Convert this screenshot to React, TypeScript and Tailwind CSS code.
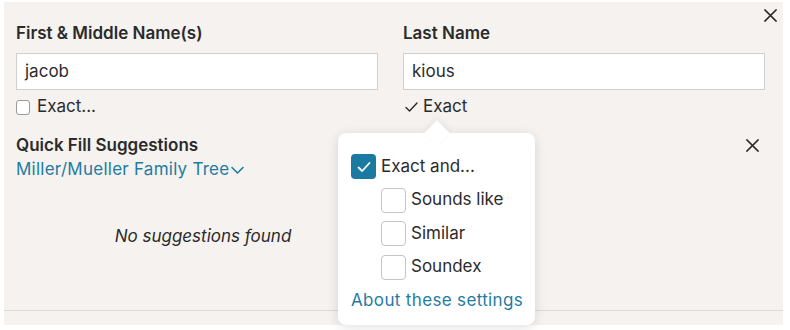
import React from "react";

const font = { fontFamily: "Inter, 'Noto Sans', sans-serif" };

function CloseIcon({ size = 16 }: { size?: number }) {
  return (
    <svg width={size} height={size} viewBox="0 0 16 16" fill="none">
      <path d="M2 2L14 14M14 2L2 14" stroke="#2b2b2b" strokeWidth="1.6" strokeLinecap="round" />
    </svg>
  );
}

function CheckBox({ checked = false }: { checked?: boolean }) {
  if (checked) {
    return (
      <span className="flex h-[25px] w-[25px] shrink-0 items-center justify-center rounded-[4px] bg-[#1b7aa1]">
        <svg width="16" height="16" viewBox="0 0 16 16" fill="none">
          <path d="M2.5 8.5L6.2 12L13.5 4" stroke="white" strokeWidth="1.8" strokeLinecap="round" strokeLinejoin="round" />
        </svg>
      </span>
    );
  }
  return <span className="h-[25px] w-[25px] shrink-0 rounded-[4px] border border-[#c4c4c4] bg-white" />;
}

export default function App() {
  return (
    <div className="h-[330px] w-[790px] bg-white pl-[4px] pt-[2px] text-[#2b2b2b]" style={font}>
      <div className="relative h-[323px] w-[779px] bg-[#f5f2ef]">
        {/* top close */}
        <button className="absolute right-[5px] top-[6px]" aria-label="Close">
          <CloseIcon size={15} />
        </button>

        <div className="pl-[12px] pr-[18px] pt-[19px]">
          <div className="grid grid-cols-[362px_362px] gap-x-[25px]">
            <div>
              <div className="text-[17px] font-semibold leading-[24px]">First &amp; Middle Name(s)</div>
              <div className="mt-[8px] flex h-[37px] items-center border border-[#cfcfcf] bg-white px-[8px] text-[17px]">
                jacob
              </div>
              <label className="mt-[5px] flex h-[24px] items-center gap-[7px] text-[17px]">
                <span className="h-[15px] w-[14px] rounded-[3px] border border-[#9a9a9a] bg-white" />
                Exact...
              </label>
            </div>
            <div>
              <div className="text-[17px] font-semibold leading-[24px]">Last Name</div>
              <div className="mt-[8px] flex h-[37px] items-center border border-[#cfcfcf] bg-white px-[8px] text-[17px]">
                kious
              </div>
              <div className="mt-[5px] flex h-[24px] items-center gap-[5px] pl-[2px] text-[17px]">
                <svg width="13" height="12" viewBox="0 0 13 12" fill="none">
                  <path d="M1 6.5L4.5 10L12 2" stroke="#2b2b2b" strokeWidth="1.4" strokeLinecap="round" strokeLinejoin="round" />
                </svg>
                Exact
              </div>
            </div>
          </div>

          <div className="mt-[14px] flex items-start justify-between">
            <div>
              <div className="text-[17px] font-semibold leading-[24px]">Quick Fill Suggestions</div>
              <div className="flex items-center text-[17px] leading-[24px] tracking-[0.25px] text-[#1f7ca3]">
                Miller/Mueller Family Tree
                <svg width="15" height="10" viewBox="0 0 15 10" fill="none" className="ml-[1px] mt-[2px]">
                  <path d="M2 2.5L7.5 8L13 2.5" stroke="#1f7ca3" strokeWidth="1.6" strokeLinecap="round" strokeLinejoin="round" />
                </svg>
              </div>
            </div>
            <button className="mr-[5px] mt-[5px]" aria-label="Close suggestions">
              <CloseIcon size={15} />
            </button>
          </div>

          <div className="mt-[43px] w-[362px] pl-[12px] text-center text-[17px] italic leading-[24px]">
            No suggestions found
          </div>
        </div>

        <div className="absolute bottom-[14px] left-0 right-0 border-t border-[#dcd9d6]" />

        {/* match options popover */}
        <div className="absolute left-[334px] top-[131px] h-[192px] w-[197px] rounded-[8px] bg-white shadow-[0_2px_12px_rgba(0,0,0,0.13)]">
          <span className="absolute left-[90px] top-[-9px] h-[18px] w-[18px] rotate-45 bg-white shadow-[-2px_-2px_6px_rgba(0,0,0,0.06)]" />
          <div className="relative flex flex-col pl-[13px] pt-[21px] text-[17px]">
            <label className="flex h-[25px] items-center gap-[5px]">
              <CheckBox checked />
              Exact and...
            </label>
            <div className="mt-[8.5px] flex flex-col gap-[8.5px] pl-[30px]">
              <label className="flex h-[25px] items-center gap-[5px]">
                <CheckBox />
                Sounds like
              </label>
              <label className="flex h-[25px] items-center gap-[5px]">
                <CheckBox />
                Similar
              </label>
              <label className="flex h-[25px] items-center gap-[5px]">
                <CheckBox />
                Soundex
              </label>
            </div>
            <a className="mt-[8.5px] leading-[24px] tracking-[0.35px] text-[#1f7ca3]">About these settings</a>
          </div>
        </div>
      </div>
    </div>
  );
}
